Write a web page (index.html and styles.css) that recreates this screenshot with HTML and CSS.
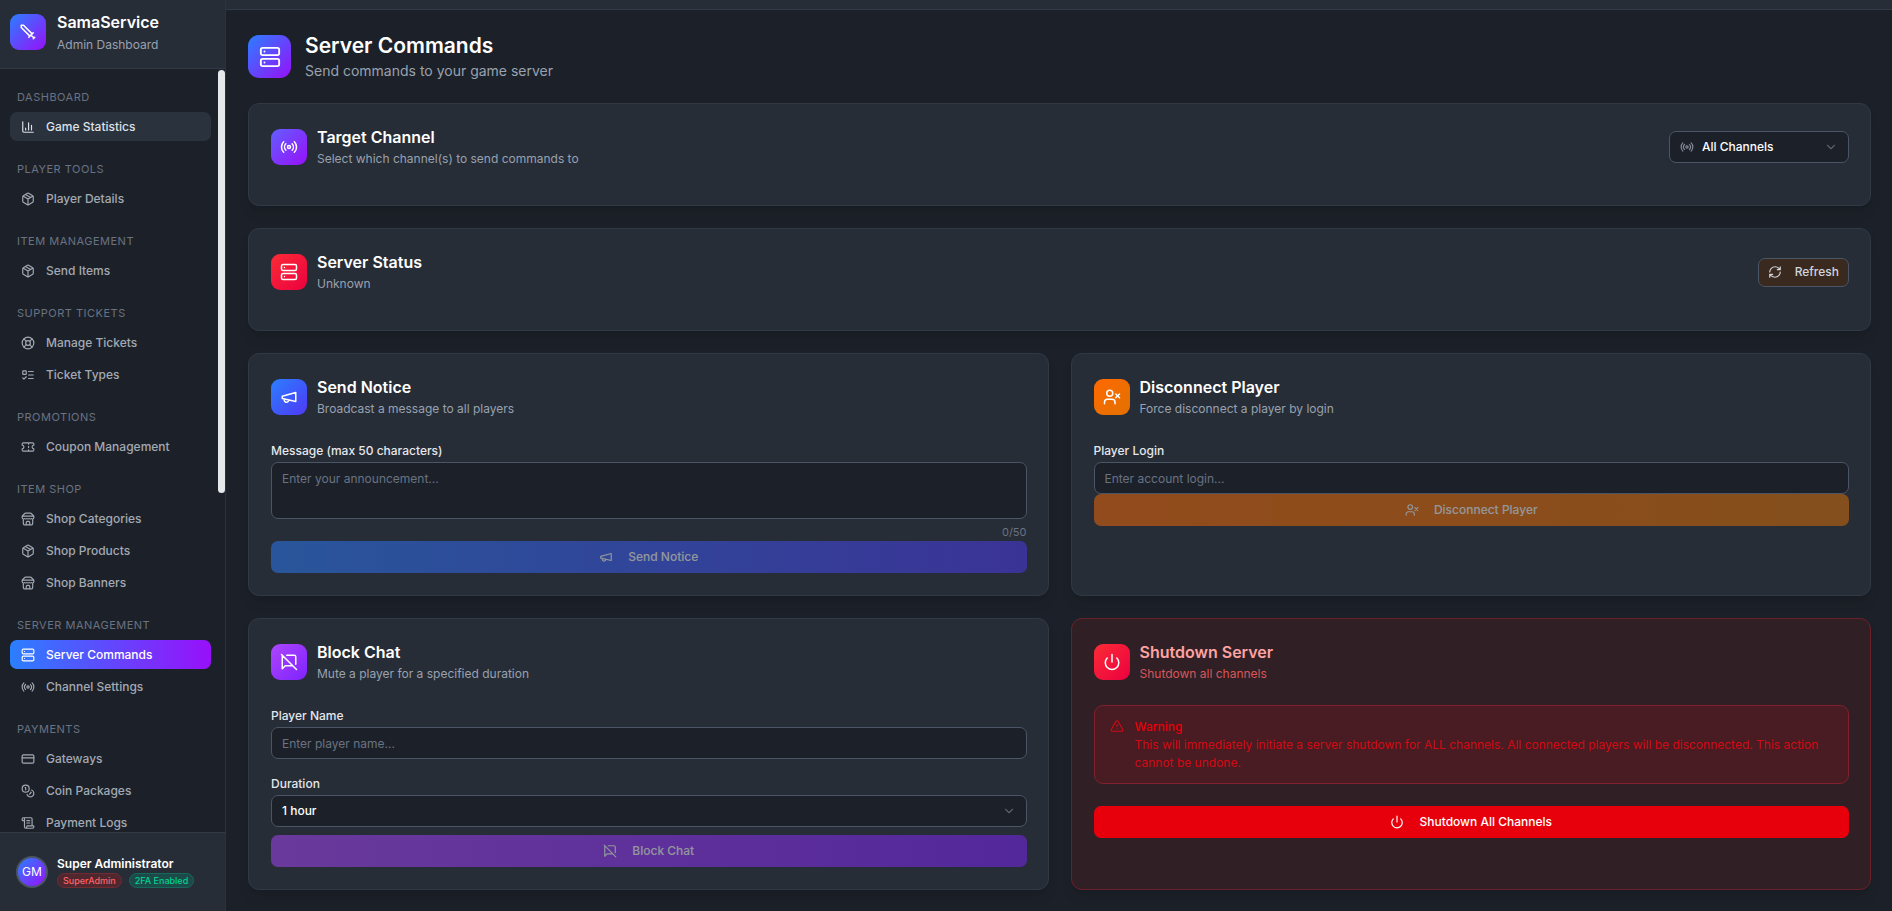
FILE: index.html
```html
<!DOCTYPE html>
<html lang="en">
<head>
    <meta charset="UTF-8">
    <meta name="viewport" content="width=device-width, initial-scale=1.0">
    <title>SamaService - Server Commands</title>
    <link rel="stylesheet" href="styles.css">
</head>
<body>
    <!-- Icon sprite -->
    <svg class="sprite" aria-hidden="true">
        <symbol id="i-sword" viewBox="0 0 24 24"><path d="M14.5 17.5 3 6V3h3l11.5 11.5M13 19l6-6M16 16l4 4M19 21l2-2"/></symbol>
        <symbol id="i-chart" viewBox="0 0 24 24"><path d="M3 3v16a2 2 0 0 0 2 2h16M18 17V9M13 17V5M8 17v-3"/></symbol>
        <symbol id="i-package" viewBox="0 0 24 24"><path d="M11 21.73a2 2 0 0 0 2 0l7-4A2 2 0 0 0 21 16V8a2 2 0 0 0-1-1.73l-7-4a2 2 0 0 0-2 0l-7 4A2 2 0 0 0 3 8v8a2 2 0 0 0 1 1.73zM12 22V12M3.29 7 12 12l8.71-5M7.5 4.27l9 5.15"/></symbol>
        <symbol id="i-lifebuoy" viewBox="0 0 24 24"><circle cx="12" cy="12" r="10"/><path d="m4.93 4.93 4.24 4.24M14.83 9.17l4.24-4.24M14.83 14.83l4.24 4.24M9.17 14.83l-4.24 4.24"/><circle cx="12" cy="12" r="4"/></symbol>
        <symbol id="i-todo" viewBox="0 0 24 24"><rect x="3" y="5" width="6" height="6" rx="1"/><path d="m3 17 2 2 4-4M13 6h8M13 12h8M13 18h8"/></symbol>
        <symbol id="i-ticket" viewBox="0 0 24 24"><path d="M2 9a3 3 0 0 1 0 6v2a2 2 0 0 0 2 2h16a2 2 0 0 0 2-2v-2a3 3 0 0 1 0-6V7a2 2 0 0 0-2-2H4a2 2 0 0 0-2 2ZM13 5v2M13 17v2M13 11v2"/></symbol>
        <symbol id="i-store" viewBox="0 0 24 24"><path d="m2 7 4.41-4.41A2 2 0 0 1 7.83 2h8.34a2 2 0 0 1 1.42.59L22 7M4 12v8a2 2 0 0 0 2 2h12a2 2 0 0 0 2-2v-8M15 22v-4a2 2 0 0 0-2-2h-2a2 2 0 0 0-2 2v4M2 7h20M22 7v3a2 2 0 0 1-2 2a2.7 2.7 0 0 1-1.59-.63.7.7 0 0 0-.82 0A2.7 2.7 0 0 1 16 12a2.7 2.7 0 0 1-1.59-.63.7.7 0 0 0-.82 0A2.7 2.7 0 0 1 12 12a2.7 2.7 0 0 1-1.59-.63.7.7 0 0 0-.82 0A2.7 2.7 0 0 1 8 12a2.7 2.7 0 0 1-1.59-.63.7.7 0 0 0-.82 0A2.7 2.7 0 0 1 4 12a2 2 0 0 1-2-2V7"/></symbol>
        <symbol id="i-server" viewBox="0 0 24 24"><rect x="2" y="2" width="20" height="8" rx="2"/><rect x="2" y="14" width="20" height="8" rx="2"/><path d="M6 6h.01M6 18h.01"/></symbol>
        <symbol id="i-radio" viewBox="0 0 24 24"><path d="M4.9 19.1C1 15.2 1 8.8 4.9 4.9M7.8 16.2c-2.3-2.3-2.3-6.1 0-8.5M16.2 7.8c2.3 2.3 2.3 6.1 0 8.5M19.1 4.9C23 8.8 23 15.1 19.1 19"/><circle cx="12" cy="12" r="2"/></symbol>
        <symbol id="i-card" viewBox="0 0 24 24"><rect x="2" y="5" width="20" height="14" rx="2"/><path d="M2 10h20"/></symbol>
        <symbol id="i-coins" viewBox="0 0 24 24"><circle cx="8" cy="8" r="6"/><path d="M18.09 10.37A6 6 0 1 1 10.34 18M7 6h1v4M16.71 13.88l.7.71-2.82 2.82"/></symbol>
        <symbol id="i-scroll" viewBox="0 0 24 24"><path d="M15 12h-5M15 8h-5M19 17V5a2 2 0 0 0-2-2H4M8 21h12a2 2 0 0 0 2-2v-1a1 1 0 0 0-1-1H11a1 1 0 0 0-1 1v1a2 2 0 1 1-4 0V5a2 2 0 1 0-4 0v2a1 1 0 0 0 1 1h3"/></symbol>
        <symbol id="i-megaphone" viewBox="0 0 24 24"><path d="m3 11 18-5v12L3 14v-3zM11.6 16.8a3 3 0 1 1-5.8-1.6"/></symbol>
        <symbol id="i-user-x" viewBox="0 0 24 24"><path d="M16 21v-2a4 4 0 0 0-4-4H6a4 4 0 0 0-4 4v2"/><circle cx="9" cy="7" r="4"/><path d="m17 8 5 5M22 8l-5 5"/></symbol>
        <symbol id="i-chat-off" viewBox="0 0 24 24"><path d="M21 15V5a2 2 0 0 0-2-2H9M2 2l20 20M3.6 3.6c-.4.3-.6.8-.6 1.4v16l4-4h10"/></symbol>
        <symbol id="i-power" viewBox="0 0 24 24"><path d="M12 2v10M18.4 6.6a9 9 0 1 1-12.77.04"/></symbol>
        <symbol id="i-alert" viewBox="0 0 24 24"><path d="m21.73 18-8-14a2 2 0 0 0-3.48 0l-8 14A2 2 0 0 0 4 21h16a2 2 0 0 0 1.73-3M12 9v4M12 17h.01"/></symbol>
        <symbol id="i-refresh" viewBox="0 0 24 24"><path d="M3 12a9 9 0 0 1 9-9 9.75 9.75 0 0 1 6.74 2.74L21 8M21 3v5h-5M21 12a9 9 0 0 1-9 9 9.75 9.75 0 0 1-6.74-2.74L3 16M8 16H3v5"/></symbol>
        <symbol id="i-chevron" viewBox="0 0 24 24"><path d="m6 9 6 6 6-6"/></symbol>
    </svg>

    <div class="app">
        <aside class="sidebar">
            <div class="brand">
                <span class="brand-logo"><svg class="icon"><use href="#i-sword"/></svg></span>
                <div>
                    <div class="brand-name">SamaService</div>
                    <div class="brand-sub">Admin Dashboard</div>
                </div>
            </div>

            <div class="nav-wrap">
                <nav class="nav">
                    <div class="nav-group">
                        <div class="nav-label">Dashboard</div>
                        <a href="#" class="nav-item hovered"><svg class="icon"><use href="#i-chart"/></svg>Game Statistics</a>
                    </div>
                    <div class="nav-group">
                        <div class="nav-label">Player Tools</div>
                        <a href="#" class="nav-item"><svg class="icon"><use href="#i-package"/></svg>Player Details</a>
                    </div>
                    <div class="nav-group">
                        <div class="nav-label">Item Management</div>
                        <a href="#" class="nav-item"><svg class="icon"><use href="#i-package"/></svg>Send Items</a>
                    </div>
                    <div class="nav-group">
                        <div class="nav-label">Support Tickets</div>
                        <a href="#" class="nav-item"><svg class="icon"><use href="#i-lifebuoy"/></svg>Manage Tickets</a>
                        <a href="#" class="nav-item"><svg class="icon"><use href="#i-todo"/></svg>Ticket Types</a>
                    </div>
                    <div class="nav-group">
                        <div class="nav-label">Promotions</div>
                        <a href="#" class="nav-item"><svg class="icon"><use href="#i-ticket"/></svg>Coupon Management</a>
                    </div>
                    <div class="nav-group">
                        <div class="nav-label">Item Shop</div>
                        <a href="#" class="nav-item"><svg class="icon"><use href="#i-store"/></svg>Shop Categories</a>
                        <a href="#" class="nav-item"><svg class="icon"><use href="#i-package"/></svg>Shop Products</a>
                        <a href="#" class="nav-item"><svg class="icon"><use href="#i-store"/></svg>Shop Banners</a>
                    </div>
                    <div class="nav-group">
                        <div class="nav-label">Server Management</div>
                        <a href="#" class="nav-item active"><svg class="icon"><use href="#i-server"/></svg>Server Commands</a>
                        <a href="#" class="nav-item"><svg class="icon"><use href="#i-radio"/></svg>Channel Settings</a>
                    </div>
                    <div class="nav-group">
                        <div class="nav-label">Payments</div>
                        <a href="#" class="nav-item"><svg class="icon"><use href="#i-card"/></svg>Gateways</a>
                        <a href="#" class="nav-item"><svg class="icon"><use href="#i-coins"/></svg>Coin Packages</a>
                        <a href="#" class="nav-item"><svg class="icon"><use href="#i-scroll"/></svg>Payment Logs</a>
                    </div>
                </nav>
                <div class="scroll-track"><div class="scroll-thumb"></div></div>
            </div>

            <div class="user">
                <span class="avatar">GM</span>
                <div class="user-info">
                    <div class="user-name">Super Administrator</div>
                    <div class="badges">
                        <span class="badge badge-red">SuperAdmin</span>
                        <span class="badge badge-green">2FA Enabled</span>
                    </div>
                </div>
            </div>
        </aside>

        <div class="page">
            <div class="topbar"></div>
            <main class="content">
                <header class="page-header">
                    <span class="page-icon"><svg class="icon"><use href="#i-server"/></svg></span>
                    <div>
                        <h1>Server Commands</h1>
                        <p>Send commands to your game server</p>
                    </div>
                </header>

                <section class="card">
                    <div class="card-header">
                        <span class="card-icon violet"><svg class="icon"><use href="#i-radio"/></svg></span>
                        <div class="card-title">
                            <h2>Target Channel</h2>
                            <p>Select which channel(s) to send commands to</p>
                        </div>
                        <div class="select-box channel-select">
                            <svg class="icon"><use href="#i-radio"/></svg>
                            <select aria-label="Target channel">
                                <option>All Channels</option>
                            </select>
                            <svg class="icon chevron"><use href="#i-chevron"/></svg>
                        </div>
                    </div>
                </section>

                <section class="card">
                    <div class="card-header">
                        <span class="card-icon red"><svg class="icon"><use href="#i-server"/></svg></span>
                        <div class="card-title">
                            <h2>Server Status</h2>
                            <p>Unknown</p>
                        </div>
                        <button type="button" class="btn-refresh"><svg class="icon"><use href="#i-refresh"/></svg>Refresh</button>
                    </div>
                </section>

                <div class="grid">
                    <section class="card">
                        <div class="card-header">
                            <span class="card-icon blue"><svg class="icon"><use href="#i-megaphone"/></svg></span>
                            <div class="card-title">
                                <h2>Send Notice</h2>
                                <p>Broadcast a message to all players</p>
                            </div>
                        </div>
                        <label for="message">Message (max 50 characters)</label>
                        <textarea id="message" maxlength="50" placeholder="Enter your announcement..."></textarea>
                        <div class="counter">0/50</div>
                        <button type="button" class="btn btn-blue" disabled><svg class="icon"><use href="#i-megaphone"/></svg>Send Notice</button>
                    </section>

                    <section class="card">
                        <div class="card-header">
                            <span class="card-icon orange"><svg class="icon"><use href="#i-user-x"/></svg></span>
                            <div class="card-title">
                                <h2>Disconnect Player</h2>
                                <p>Force disconnect a player by login</p>
                            </div>
                        </div>
                        <label for="login">Player Login</label>
                        <input type="text" id="login" placeholder="Enter account login...">
                        <button type="button" class="btn btn-orange" disabled><svg class="icon"><use href="#i-user-x"/></svg>Disconnect Player</button>
                    </section>

                    <section class="card">
                        <div class="card-header">
                            <span class="card-icon purple"><svg class="icon"><use href="#i-chat-off"/></svg></span>
                            <div class="card-title">
                                <h2>Block Chat</h2>
                                <p>Mute a player for a specified duration</p>
                            </div>
                        </div>
                        <div class="field">
                            <label for="player">Player Name</label>
                            <input type="text" id="player" placeholder="Enter player name...">
                        </div>
                        <label for="duration">Duration</label>
                        <div class="select-box duration-select">
                            <select id="duration">
                                <option>1 hour</option>
                            </select>
                            <svg class="icon chevron"><use href="#i-chevron"/></svg>
                        </div>
                        <button type="button" class="btn btn-purple" disabled><svg class="icon"><use href="#i-chat-off"/></svg>Block Chat</button>
                    </section>

                    <section class="card danger">
                        <div class="card-header">
                            <span class="card-icon red"><svg class="icon"><use href="#i-power"/></svg></span>
                            <div class="card-title">
                                <h2>Shutdown Server</h2>
                                <p>Shutdown all channels</p>
                            </div>
                        </div>
                        <div class="alert" role="alert">
                            <svg class="icon"><use href="#i-alert"/></svg>
                            <div>
                                <strong>Warning</strong>
                                <p>This will immediately initiate a server shutdown for ALL channels. All connected players will be disconnected. This action cannot be undone.</p>
                            </div>
                        </div>
                        <button type="button" class="btn btn-red"><svg class="icon"><use href="#i-power"/></svg>Shutdown All Channels</button>
                    </section>
                </div>
            </main>
        </div>
    </div>
</body>
</html>
```
FILE: styles.css
```css
* {
    box-sizing: border-box;
}

body {
    margin: 0;
    font-family: Inter, 'Liberation Sans', sans-serif;
    font-size: 12px;
    line-height: 18px;
    color: #fff;
    background-color: #1c2129;
}

h1, h2, p {
    margin: 0;
}

button, input, select, textarea {
    font: inherit;
    color: inherit;
}

.sprite {
    display: none;
}

.icon {
    width: 14px;
    height: 14px;
    flex-shrink: 0;
    fill: none;
    stroke: currentColor;
    stroke-width: 2;
    stroke-linecap: round;
    stroke-linejoin: round;
}

.app {
    display: flex;
    height: 100vh;
}

/* Sidebar */
.sidebar {
    width: 226px;
    flex-shrink: 0;
    display: flex;
    flex-direction: column;
    border-right: 1px solid #2b323c;
}

.brand {
    display: flex;
    gap: 11px;
    height: 69px;
    padding: 11px 10px;
    background-color: #272d37;
    border-bottom: 1px solid #323a45;
}

.brand-logo {
    display: flex;
    align-items: center;
    justify-content: center;
    width: 36px;
    height: 36px;
    margin-top: 3px;
    border-radius: 9px;
    background: linear-gradient(135deg, #2b7fff, #9810fa);
}

.brand-logo .icon {
    width: 18px;
    height: 18px;
}

.brand-name {
    font-size: 16px;
    font-weight: 600;
    line-height: 22px;
}

.brand-sub {
    line-height: 24px;
    color: #99a1af;
}

.nav-wrap {
    flex: 1;
    min-height: 0;
    display: flex;
    gap: 7px;
}

.nav {
    flex: 1;
    overflow-y: auto;
    scrollbar-width: none;
    padding: 14px 0 0 10px;
}

.nav-group {
    display: flex;
    flex-direction: column;
    gap: 3px;
    margin-bottom: 14px;
}

.nav-label {
    height: 26px;
    padding-left: 7px;
    font-size: 11px;
    line-height: 29px;
    letter-spacing: 0.5px;
    text-transform: uppercase;
    color: #6a7282;
}

.nav-item {
    display: flex;
    align-items: center;
    flex-shrink: 0;
    gap: 11px;
    height: 29px;
    padding: 0 11px;
    border-radius: 7px;
    font-weight: 500;
    color: #a3a9b3;
    text-decoration: none;
}

.nav-item.hovered {
    background-color: #2a323d;
    color: #dde1e7;
}

.nav-item.active {
    background: linear-gradient(90deg, #2b7fff, #9810fa);
    color: #fff;
}

.scroll-track {
    width: 7px;
    padding-top: 1px;
}

.scroll-thumb {
    height: 423px;
    border-radius: 4px;
    background-color: #e6e9ea;
}

.user {
    display: flex;
    align-items: center;
    gap: 9px;
    height: 79px;
    padding: 0 16px;
    background-color: #272d37;
    border-top: 1px solid #323a45;
}

.avatar {
    display: flex;
    align-items: center;
    justify-content: center;
    width: 32px;
    height: 32px;
    border: 2px solid #4a5565;
    border-radius: 50%;
    background: linear-gradient(135deg, #2b7fff, #9810fa);
}

.user-info {
    padding-bottom: 2px;
}

.user-name {
    font-weight: 600;
    line-height: 18px;
}

.badges {
    display: flex;
    gap: 7px;
}

.badge {
    height: 15px;
    padding: 0 5px;
    border: 1px solid;
    border-radius: 8px;
    font-size: 9px;
    line-height: 13px;
    font-weight: 500;
    white-space: nowrap;
}

.badge-red {
    color: #ff6467;
    background-color: #51272f;
    border-color: #702b33;
}

.badge-green {
    color: #00d492;
    background-color: #1c4a48;
    border-color: #14695a;
}

/* Page */
.page {
    flex: 1;
    min-width: 0;
    overflow: auto;
}

.topbar {
    height: 10px;
    background-color: #272d37;
    border-bottom: 1px solid #323a45;
}

.content {
    display: flex;
    flex-direction: column;
    gap: 22px;
    padding: 22px 21px 22px 22px;
}

.page-header {
    display: flex;
    align-items: center;
    gap: 14px;
    height: 49px;
}

.page-icon {
    display: flex;
    align-items: center;
    justify-content: center;
    width: 43px;
    height: 43px;
    border-radius: 11px;
    background: linear-gradient(135deg, #2b7fff, #9810fa);
}

.page-icon .icon {
    width: 22px;
    height: 22px;
}

.page-header h1 {
    font-size: 21px;
    line-height: 28px;
    font-weight: 600;
}

.page-header p {
    font-size: 14px;
    line-height: 22px;
    color: #99a1af;
}

.grid {
    display: grid;
    grid-template-columns: 1fr 1fr;
    gap: 22px;
}

.card {
    padding: 22px 21px 22px 22px;
    border: 1px solid #303944;
    border-radius: 11px;
    background-color: #262d37;
    box-shadow: 0 9px 14px -3px rgba(0, 0, 0, 0.1), 0 4px 6px -4px rgba(0, 0, 0, 0.1);
}

.card-header {
    display: flex;
    align-items: center;
    gap: 10px;
    height: 42px;
    margin-bottom: 24px;
}

.content > .card {
    min-height: 103px;
}

.content > .card .card-header {
    margin-bottom: 14px;
}

.card-icon {
    display: flex;
    align-items: center;
    justify-content: center;
    width: 36px;
    height: 36px;
    border-radius: 9px;
}

.card-icon .icon {
    width: 18px;
    height: 18px;
}

.card-icon.violet {
    background: linear-gradient(135deg, #615fff, #9810fa);
}

.card-icon.red {
    background: linear-gradient(135deg, #fb2c36, #ec003f);
}

.card-icon.blue {
    background: linear-gradient(135deg, #2b7fff, #4f39f6);
}

.card-icon.orange {
    background: linear-gradient(135deg, #ff6900, #e17100);
}

.card-icon.purple {
    background: linear-gradient(135deg, #ad46ff, #7f22fe);
}

.card-title {
    flex: 1;
}

.card-title h2 {
    font-size: 16px;
    line-height: 24px;
    font-weight: 600;
}

.card-title p {
    line-height: 20px;
    color: #99a1af;
}

/* Form controls */
label {
    display: block;
    margin-bottom: 2px;
    font-weight: 500;
    color: #e5e7eb;
}

input, textarea, .select-box {
    display: block;
    width: 100%;
    height: 32px;
    padding: 0 10px;
    border: 1px solid #4a5565;
    border-radius: 7px;
    background-color: #1c2129;
}

textarea {
    height: 57px;
    padding: 7px 10px;
    resize: none;
}

::placeholder {
    color: #6a7282;
    opacity: 1;
}

.field {
    margin-bottom: 16px;
}

.select-box {
    display: flex;
    align-items: center;
    gap: 8px;
}

.select-box select {
    flex: 1;
    min-width: 0;
    height: 30px;
    padding: 0;
    border: none;
    outline: none;
    appearance: none;
    background: transparent;
    font-weight: 500;
}

.select-box .icon {
    color: #858b95;
}

.select-box .chevron {
    color: #59616d;
}

.channel-select {
    width: 180px;
}

.duration-select {
    margin-bottom: 8px;
}

.counter {
    margin-top: 5px;
    font-size: 11px;
    line-height: 17px;
    text-align: right;
    color: #6a7282;
}

.btn {
    display: flex;
    align-items: center;
    justify-content: center;
    gap: 15px;
    width: 100%;
    height: 32px;
    border: none;
    border-radius: 7px;
    font-weight: 500;
}

.btn:disabled {
    opacity: 0.5;
}

.btn-blue {
    background: linear-gradient(90deg, #2b7fff, #4f39f6);
}

.btn-orange {
    background: linear-gradient(90deg, #ff6900, #e17100);
}

.btn-purple {
    background: linear-gradient(90deg, #ad46ff, #7f22fe);
}

.btn-red {
    background-color: #e7000b;
}

.btn-refresh {
    display: flex;
    align-items: center;
    gap: 13px;
    height: 29px;
    padding: 0 9px;
    border: 1px solid #4a5565;
    border-radius: 7px;
    background-color: #3a291f;
    color: #d1d5dc;
    font-weight: 500;
}

/* Shutdown card */
.danger {
    background-color: #302025;
    border-color: #6b2029;
}

.danger .card-header {
    margin-bottom: 22px;
}

.danger h2 {
    color: #ffa2a2;
}

.danger .card-title p {
    color: #d8565a;
}

.alert {
    display: flex;
    gap: 11px;
    margin-bottom: 22px;
    padding: 11px 15px;
    border: 1px solid #82202d;
    border-radius: 9px;
    background-color: #481c22;
    color: #d20a14;
}

.alert .icon {
    margin-top: 2px;
}

.alert strong {
    display: block;
    font-weight: 500;
    line-height: 19px;
    color: #e7000b;
}
```
